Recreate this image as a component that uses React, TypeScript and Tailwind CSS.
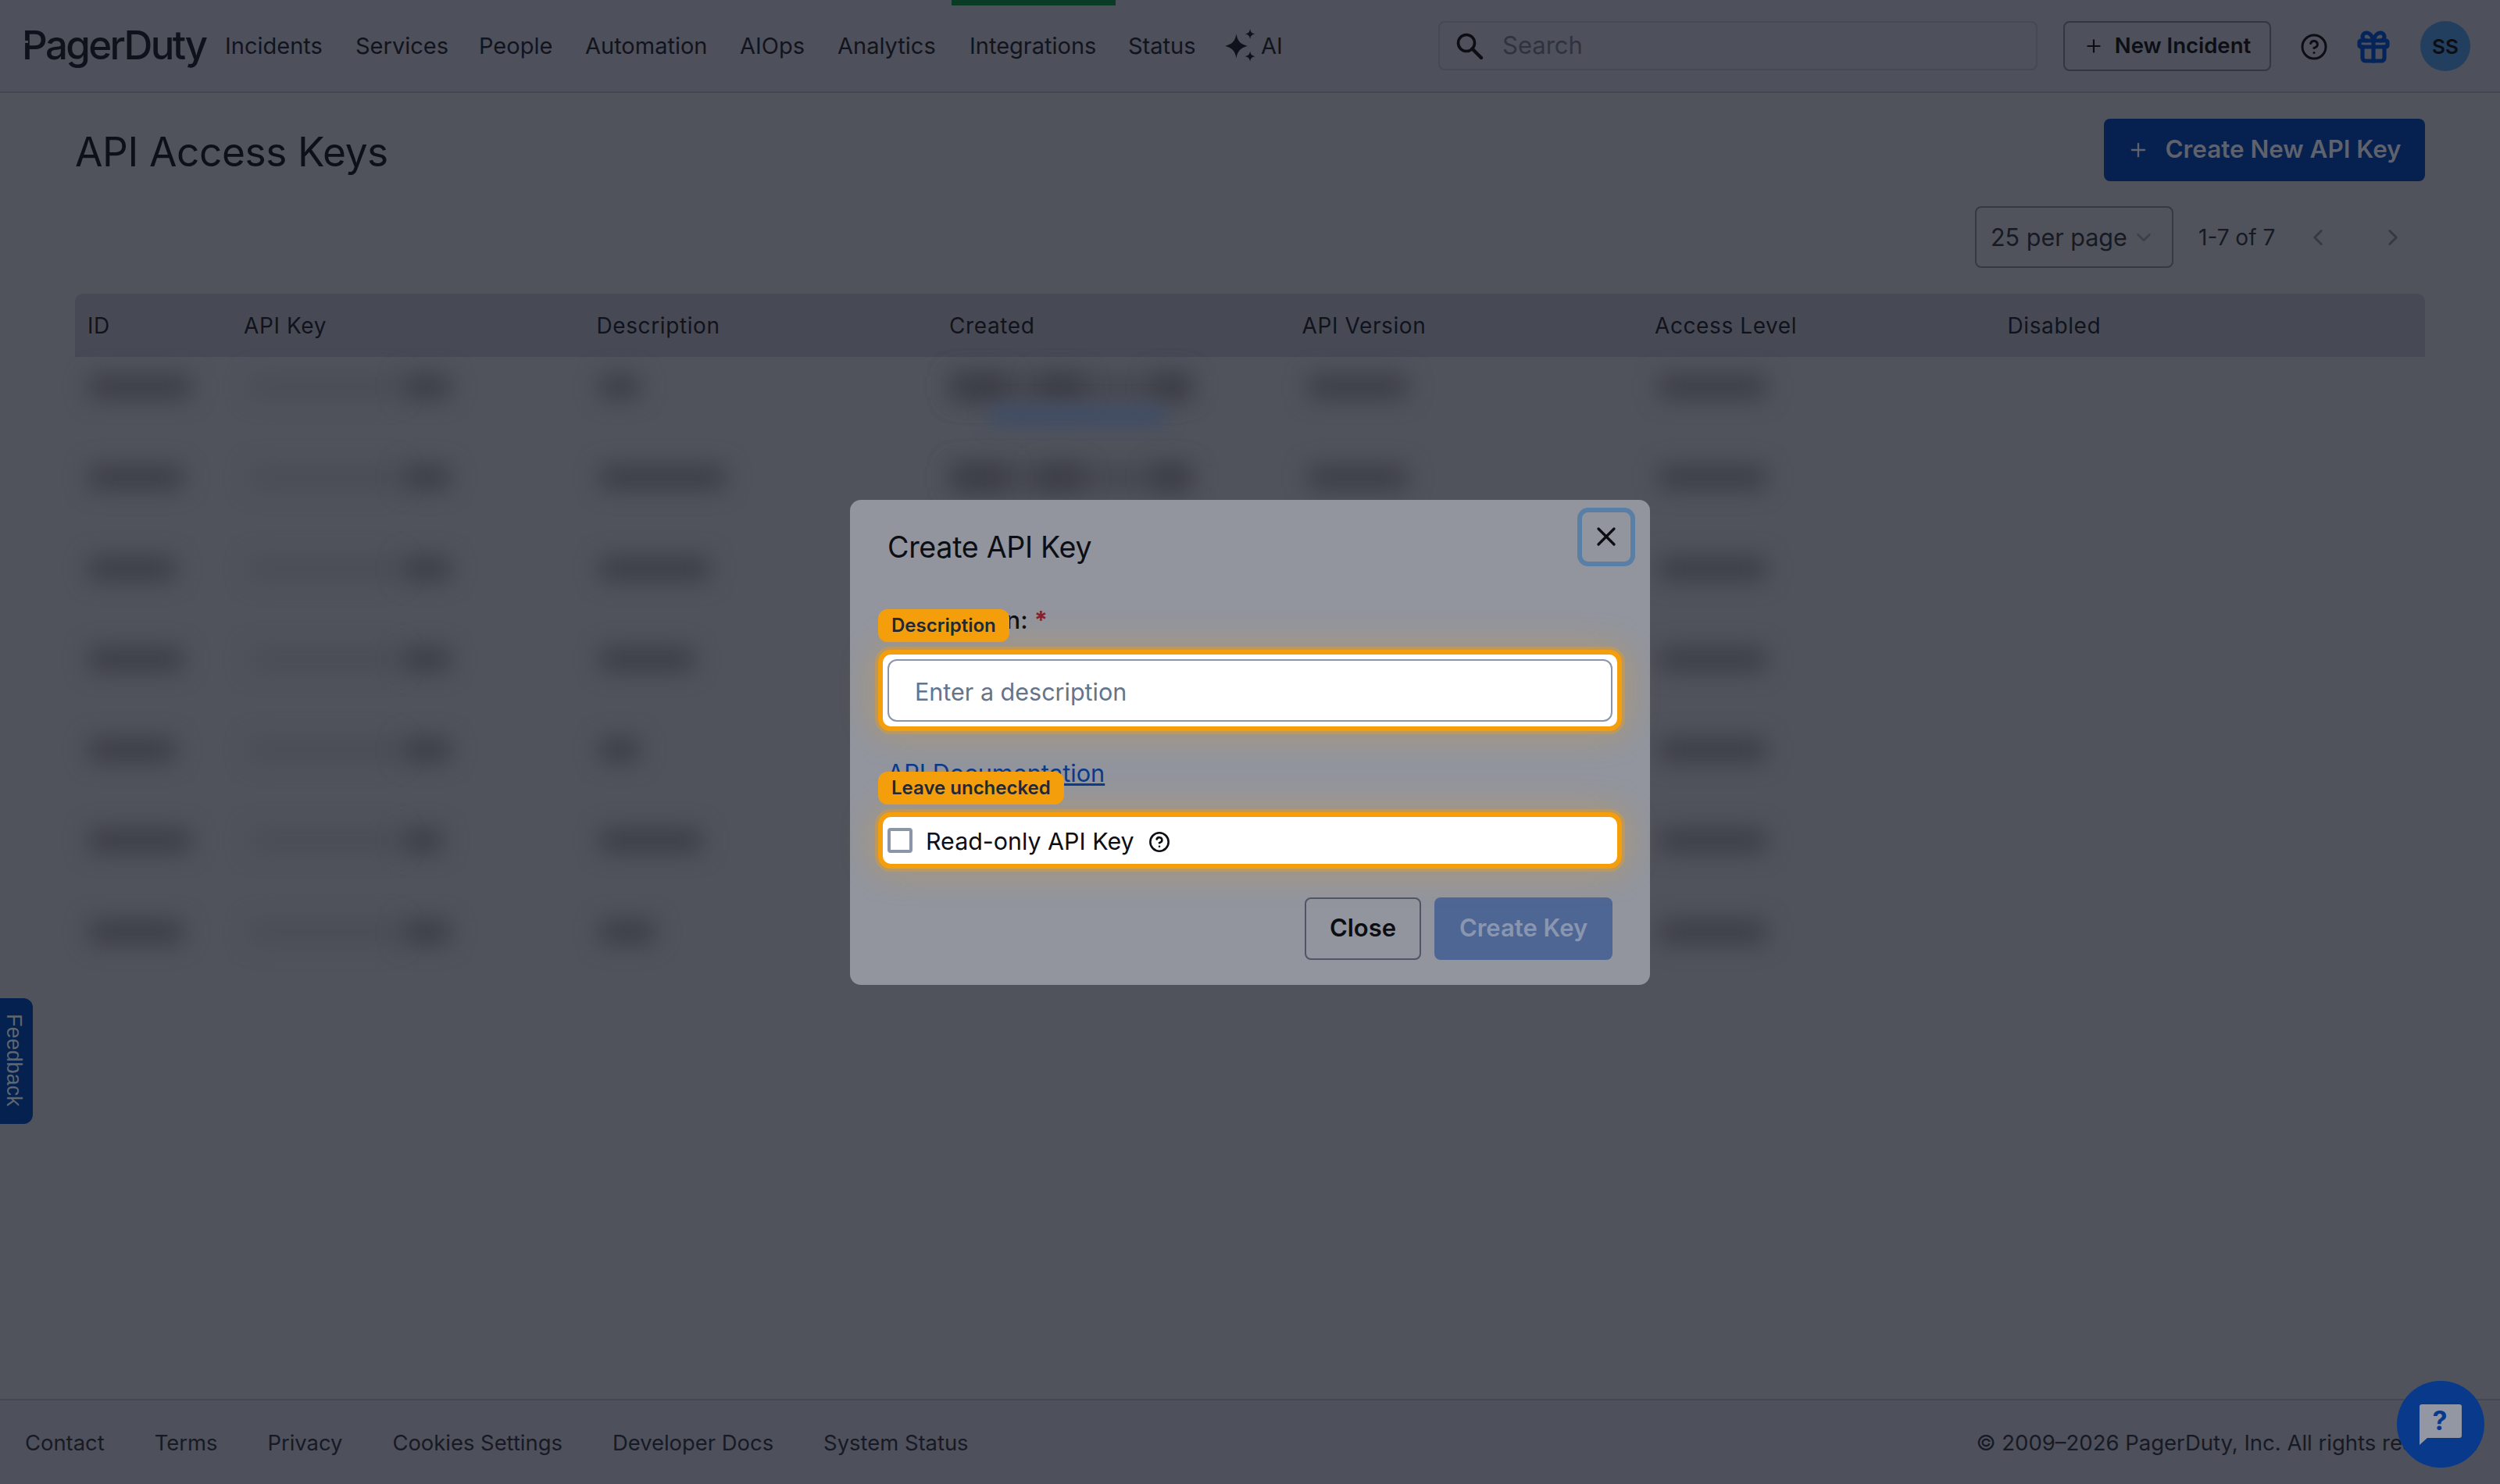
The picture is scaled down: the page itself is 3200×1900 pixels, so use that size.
import { ChevronDown, ChevronLeft, ChevronRight, CircleHelp, Gift, Plus, X } from "lucide-react";

const NAV_ITEMS = [
  { label: "Incidents", width: "w-[167px]" },
  { label: "Services", width: "w-[158px]" },
  { label: "People", width: "w-[136px]" },
  { label: "Automation", width: "w-[198px]" },
  { label: "AIOps", width: "w-[125px]" },
  { label: "Analytics", width: "w-[169px]" },
  { label: "Integrations", width: "w-[203px]" },
  { label: "Status", width: "w-[124px]" },
];

const FOOTER_LINKS = ["Contact", "Terms", "Privacy", "Cookies Settings", "Developer Docs", "System Status"];

const COLUMNS = ["ID", "API Key", "Description", "Created", "API Version", "Access Level", "Disabled"];

// widths of the blurred-out cells, one entry per row
const ROWS = [
  { id: 130, key: 60, desc: 50, link: true },
  { id: 120, key: 60, desc: 160, link: false },
  { id: 110, key: 60, desc: 140, link: false },
  { id: 120, key: 60, desc: 120, link: false },
  { id: 110, key: 60, desc: 50, link: false },
  { id: 130, key: 50, desc: 130, link: false },
  { id: 120, key: 60, desc: 70, link: false },
];

function Blob({ width, className = "" }: { width: number; className?: string }) {
  return <div className={`h-[28px] shrink-0 bg-[#3a3c44] blur-[15px] ${className}`} style={{ width }} />;
}

function TableRow({ row }: { row: (typeof ROWS)[number] }) {
  return (
    <div className="grid h-[116.3px] grid-cols-[200px_451.5px_451.5px_451.5px_451.5px_451.5px_1fr] pt-[24px]">
      <div className="pl-[18px]">
        <Blob width={row.id} />
      </div>
      <div className="flex gap-[6px] pl-[24px]">
        <div className="h-[28px] w-[190px] bg-[#4a4c55] blur-[15px]" />
        <Blob width={row.key} />
      </div>
      <div className="pl-[20px]">
        <Blob width={row.desc} />
      </div>
      <div className="relative flex flex-col gap-[12px] pl-[20px]">
        <div className="absolute left-[20px] top-0 h-[28px] w-[300px] bg-[#44464f] blur-[15px]" />
        <div className="flex gap-[36px]">
          <Blob width={72} />
          <Blob width={60} />
          <Blob width={50} className="ml-[52px]" />
        </div>
        {row.link && <div className="ml-[48px] h-[22px] w-[224px] bg-[#3d4c68] blur-[12px]" />}
      </div>
      <div className="pl-[24px]">
        <Blob width={126} />
      </div>
      <div className="pl-[22px]">
        <Blob width={136} />
      </div>
      <div />
    </div>
  );
}

function Header() {
  return (
    <header className="relative flex h-[119px] shrink-0 items-center border-b-2 border-[#444752] bg-[#4e505b] text-[#12141d]">
      <div className="absolute left-[1218px] top-0 h-[7px] w-[210px] bg-[#0a3b25]" />
      <div className="relative ml-[28px] w-[260px] text-[51px] font-medium tracking-[-2.6px] text-[#0f121b]">
        PagerDuty
        <span className="absolute left-0 top-[32px] h-[3px] w-[8px] bg-[#4e505b]" />
      </div>
      <nav className="flex items-center text-[29px]">
        {NAV_ITEMS.map((item) => (
          <span key={item.label} className={item.width}>
            {item.label}
          </span>
        ))}
        <span className="-ml-[2px] flex items-center gap-[4px]">
          <svg viewBox="0 0 40 40" className="h-[44px] w-[44px] fill-[#0f121b]">
            <path d="M15 6 C16.5 14 19 17.5 28 20 C19 22.5 16.5 26 15 34 C13.5 26 11 22.5 2 20 C11 17.5 13.5 14 15 6Z" />
            <path d="M31 0 C31.7 4 33 5.3 37 6 C33 6.7 31.7 8 31 12 C30.3 8 29 6.7 25 6 C29 5.3 30.3 4 31 0Z" />
            <path d="M31 26 C31.7 30 33 31.3 37 32 C33 32.7 31.7 34 31 38 C30.3 34 29 32.7 25 32 C29 31.3 30.3 30 31 26Z" />
          </svg>
          AI
        </span>
      </nav>
      <div className="absolute left-[1841px] top-[27px] flex h-[63px] w-[767px] items-center rounded-[8px] border-2 border-[#464954] pl-[20px] text-[31px] text-[#30333d]">
        <svg viewBox="0 0 36 36" className="mr-[24px] h-[36px] w-[36px] fill-none stroke-[#0c0e14]">
          <circle cx="14" cy="14" r="10.5" strokeWidth="3.6" />
          <path d="M21.5 21.5 L33 33" strokeWidth="4.4" strokeLinecap="round" />
        </svg>
        Search
      </div>
      <div className="absolute left-[2641px] top-[27px] flex h-[64px] w-[266px] items-center justify-center gap-[14px] rounded-[8px] border-2 border-[#343741] text-[27.5px] font-semibold text-[#0c0e14]">
        <Plus className="h-[26px] w-[26px]" strokeWidth={2} />
        New Incident
      </div>
      <CircleHelp className="absolute left-[2944px] top-[42px] h-[36px] w-[36px] text-[#0c0e14]" strokeWidth={2} />
      <Gift className="absolute left-[3014px] top-[36px] h-[48px] w-[48px] text-[#05255a]" strokeWidth={2.6} />
      <div className="absolute left-[3098px] top-[27px] flex h-[64px] w-[64px] items-center justify-center rounded-full bg-[#223f5f] text-[26px] font-semibold text-[#0c0e14]">
        SS
      </div>
    </header>
  );
}

function Main() {
  return (
    <main className="flex-1 bg-[#50535c] px-[96px]">
      <div className="flex items-start justify-between pt-[33px]">
        <h1 className="pt-[8px] text-[51.4px] leading-[68px] tracking-[-0.4px] text-[#0d1018]">API Access Keys</h1>
        <button className="flex h-[80px] w-[411px] items-center justify-center gap-[20px] rounded-[8px] bg-[#06214f] text-[31.4px] font-semibold text-[#5f626c]">
          <Plus className="h-[28px] w-[28px]" strokeWidth={2} />
          Create New API Key
        </button>
      </div>
      <div className="mt-[32px] flex h-[79px] items-center justify-end text-[30.5px] text-[#171a23]">
        <div className="flex h-[79px] w-[254px] items-center whitespace-nowrap rounded-[8px] border-2 border-[#363944] pl-[18px]">
          25 per page
          <ChevronDown className="ml-[6px] h-[30px] w-[30px] text-[#3c3f49]" strokeWidth={2} />
        </div>
        <span className="ml-[32px] w-[98px] whitespace-nowrap text-[28px]">1-7 of 7</span>
        <ChevronLeft className="ml-[38px] h-[34px] w-[34px] text-[#363944]" strokeWidth={2} />
        <ChevronRight className="ml-[62px] mr-[24px] h-[34px] w-[34px] text-[#363944]" strokeWidth={2} />
      </div>
      <div className="mt-[33px]">
        <div className="grid h-[81px] grid-cols-[200px_451.5px_451.5px_451.5px_451.5px_451.5px_1fr] items-center rounded-t-[10px] bg-[#474a55] text-[28px] tracking-[0.6px] text-[#11131b]">
          {COLUMNS.map((col) => (
            <span key={col} className="pl-[16px]">
              {col}
            </span>
          ))}
        </div>
        {ROWS.map((row, i) => (
          <TableRow key={i} row={row} />
        ))}
      </div>
    </main>
  );
}

function Footer() {
  return (
    <footer className="flex h-[109px] shrink-0 items-center justify-between border-t-2 border-[#444752] bg-[#4e505b] pl-[32px] pr-[28px] pt-[2px] text-[27.5px] text-[#171a24]">
      <div className="flex gap-[64px] text-[27.4px]">
        {FOOTER_LINKS.map((link) => (
          <span key={link}>{link}</span>
        ))}
      </div>
      <span>© 2009–2026 PagerDuty, Inc. All rights reserved.</span>
    </footer>
  );
}

function Modal() {
  return (
    <div className="absolute inset-0 flex items-center justify-center">
      <div className="relative h-[621px] w-[1024px] rounded-[14px] bg-[#92959e] px-[48px] pt-[39px] text-[#0c0e14]">
        <h2 className="text-[37.6px] leading-[44px] tracking-[-0.3px]">Create API Key</h2>
        <button className="absolute right-[19px] top-[10px] flex h-[75px] w-[74px] items-center justify-center rounded-[14px] border-[6px] border-[#5a7fa6]">
          <X className="h-[40px] w-[40px] text-[#0c0e14]" strokeWidth={2} />
        </button>

        <div className="mt-[52px] flex h-[40px] items-center text-[31px] font-medium">
          Description:
          <span className="ml-[8px] font-bold text-[#8b1f2b]">*</span>
        </div>

        <div className="relative -mx-[6px] mt-[23px] h-[92px] rounded-[10px] bg-white p-[6px] shadow-[0_0_0_6px_#f59e0b,0_0_0_10px_rgba(245,158,11,0.35),0_0_44px_10px_rgba(245,158,11,0.28)]">
          <div className="flex h-[80px] items-center rounded-[12px] border-2 border-[#8a95a8] pl-[33px] pt-[4px] text-[30.5px] text-[#64748b]">
            Enter a description
          </div>
          <span className="absolute -left-[6px] -top-[58px] flex h-[42px] items-center rounded-[12px] bg-[#f59e0b] px-[17px] text-[24px] font-semibold text-[#1f2937]">
            Description
          </span>
        </div>

        <div className="mt-[38px] h-[44px] text-[30.7px] leading-[44px] text-[#0a3a8a] underline">API Documentation</div>

        <div className="relative -mx-[6px] mt-[34px] flex h-[60px] items-center rounded-[10px] bg-white pl-[6px] text-[30.4px] text-[#0c0e14] shadow-[0_0_0_6px_#f59e0b,0_0_0_10px_rgba(245,158,11,0.35),0_0_44px_10px_rgba(245,158,11,0.28)]">
          <span className="h-[32px] w-[32px] rounded-[4px] border-4 border-[#8a95a8]" />
          <span className="ml-[17px] mt-[4px]">Read-only API Key</span>
          <CircleHelp className="ml-[18px] mt-[4px] h-[28px] w-[28px]" strokeWidth={2.2} />
          <span className="absolute -left-[6px] -top-[58px] flex h-[42px] items-center rounded-[12px] bg-[#f59e0b] px-[17px] text-[24px] font-semibold text-[#1f2937]">
            Leave unchecked
          </span>
        </div>

        <div className="mt-[43px] flex justify-end gap-[17px]">
          <button className="h-[80px] w-[149px] rounded-[8px] border-2 border-[#4f5566] text-[31px] font-semibold">Close</button>
          <button className="h-[80px] w-[228px] rounded-[8px] bg-[#4e6694] text-[31px] font-semibold text-[#8a96b0]">Create Key</button>
        </div>
      </div>
    </div>
  );
}

export default function App() {
  return (
    <div className="relative flex h-[1900px] w-[3200px] flex-col overflow-hidden bg-[#50535c] [font-family:Inter,sans-serif]">
      <Header />
      <Main />
      <Footer />

      <div className="absolute left-0 top-[1278px] flex h-[161px] w-[42px] items-center justify-center rounded-r-[12px] bg-[#04214f] pb-[2px] pr-[7px] text-[27px] text-[#5f6670] [font-family:'Liberation_Sans',sans-serif] [writing-mode:vertical-rl]">
        Feedback
      </div>

      <div className="absolute left-[3068px] top-[1768px] flex h-[111px] w-[112px] items-center justify-center rounded-full bg-[#08398a]">
        <svg viewBox="0 0 54 52" className="h-[52px] w-[54px]">
          <path d="M3 0 H51 A3 3 0 0 1 54 3 V40 A3 3 0 0 1 51 43 H10 L0 52 V3 A3 3 0 0 1 3 0Z" fill="#9396a3" />
          <text x="26" y="33" textAnchor="middle" fontSize="34" fontWeight="700" fill="#08398a" fontFamily="Inter, sans-serif">
            ?
          </text>
        </svg>
      </div>

      <Modal />
    </div>
  );
}
